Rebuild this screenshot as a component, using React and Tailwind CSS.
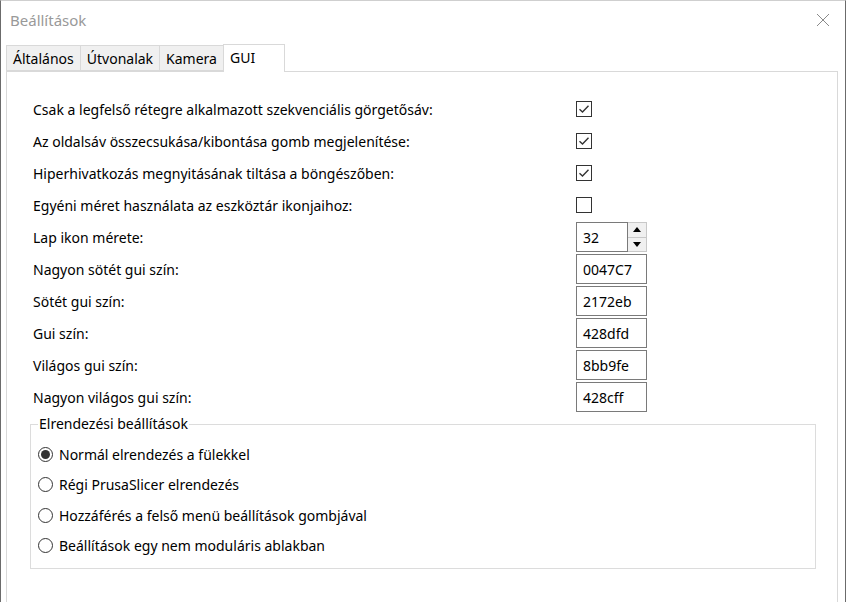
import { useState } from "react";

const font = { fontFamily: '"Noto Sans", "Open Sans", sans-serif' };

const Checkbox = ({ checked, onChange }) => (
  <button
    onClick={onChange}
    className="w-4 h-4 border border-[#333333] bg-white flex items-center justify-center"
  >
    {checked && (
      <svg width="12" height="10" viewBox="0 0 12 10">
        <path d="M1.5 5.2 L4.5 8 L10.5 1.8" fill="none" stroke="#333" strokeWidth="1.4" />
      </svg>
    )}
  </button>
);

const Radio = ({ checked, label, onClick }) => (
  <button onClick={onClick} className="flex items-center h-[30.5px] text-left">
    <span className="w-[15px] h-[15px] rounded-full border border-[#333333] bg-white flex items-center justify-center mr-[6px]">
      {checked && <span className="w-[9px] h-[9px] rounded-full bg-[#333333]" />}
    </span>
    <span>{label}</span>
  </button>
);

const Field = ({ value }) => (
  <div className="w-[71px] h-[30px] border border-[#7a7a7a] bg-white flex items-center pl-[6px]">
    {value}
  </div>
);

const tabs = ["Általános", "Útvonalak", "Kamera", "GUI"];

const App = () => {
  const [checks, setChecks] = useState([true, true, true, false]);
  const [layout, setLayout] = useState(0);
  const [size, setSize] = useState(32);

  const checkRows = [
    "Csak a legfelső rétegre alkalmazott szekvenciális görgetősáv:",
    "Az oldalsáv összecsukása/kibontása gomb megjelenítése:",
    "Hiperhivatkozás megnyitásának tiltása a böngészőben:",
    "Egyéni méret használata az eszköztár ikonjaihoz:",
  ];

  const colorRows = [
    ["Nagyon sötét gui szín:", "0047C7"],
    ["Sötét gui szín:", "2172eb"],
    ["Gui szín:", "428dfd"],
    ["Világos gui szín:", "8bb9fe"],
    ["Nagyon világos gui szín:", "428cff"],
  ];

  const layouts = [
    "Normál elrendezés a fülekkel",
    "Régi PrusaSlicer elrendezés",
    "Hozzáférés a felső menü beállítások gombjával",
    "Beállítások egy nem moduláris ablakban",
  ];

  return (
    <div
      style={font}
      className="w-[846px] h-[602px] overflow-hidden bg-white border-l border-[#6b6b6b] border-r border-t-[#cfcfcf] border-t text-[14px] text-black"
    >
      <div className="h-[42px] flex items-start justify-between">
        <span className="pl-[9px] pt-[8px] text-[15px] text-[#999999]">Beállítások</span>
        <svg width="14" height="14" viewBox="0 0 14 14" className="mt-[12px] mr-[15px]">
          <path d="M1 1 L13 13 M13 1 L1 13" stroke="#8a8a8a" strokeWidth="1" />
        </svg>
      </div>

      <div className="pl-[5px] pr-[7px]">
        <div className="flex items-end h-[28px]">
          {tabs.map((t, i) =>
            i === 3 ? (
              <div
                key={t}
                className="h-[28px] w-[62px] bg-white border border-b-0 border-[#d9d9d9] pl-[6px] pt-[2px] -mb-px relative"
              >
                {t}
              </div>
            ) : (
              <div
                key={t}
                className="h-[26px] bg-[#f0f0f0] border border-[#d9d9d9] border-r-0 px-[6px] flex items-center"
              >
                {t}
              </div>
            )
          )}
        </div>

        <div className="border border-[#d9d9d9] h-[600px] pt-[21px]">
          <div className="pl-[26px]">
            {checkRows.map((label, i) => (
              <div key={label} className="flex items-center h-8">
                <span className="w-[543px]">{label}</span>
                <Checkbox
                  checked={checks[i]}
                  onChange={() => setChecks(checks.map((c, j) => (j === i ? !c : c)))}
                />
              </div>
            ))}

            <div className="flex items-center h-8">
              <span className="w-[543px]">Lap ikon mérete:</span>
              <div className="flex h-[30px]">
                <div className="w-[52px] border border-[#7a7a7a] flex items-center pl-[6px]">
                  {size}
                </div>
                <div className="w-[19px] flex flex-col border border-l-0 border-[#c8c8c8]">
                  <button
                    onClick={() => setSize(size + 1)}
                    className="flex-1 bg-[#f0f0f0] border-b border-[#c8c8c8] flex items-center justify-center"
                  >
                    <svg width="8" height="5" viewBox="0 0 8 5">
                      <path d="M0 5 L4 0 L8 5 Z" fill="#000" />
                    </svg>
                  </button>
                  <button
                    onClick={() => setSize(size - 1)}
                    className="flex-1 bg-[#f0f0f0] flex items-center justify-center"
                  >
                    <svg width="8" height="5" viewBox="0 0 8 5">
                      <path d="M0 0 L8 0 L4 5 Z" fill="#000" />
                    </svg>
                  </button>
                </div>
              </div>
            </div>

            {colorRows.map(([label, value]) => (
              <div key={label} className="flex items-center h-8">
                <span className="w-[543px]">{label}</span>
                <Field value={value} />
              </div>
            ))}
          </div>

          <fieldset className="ml-[23px] mr-[21px] mt-[1px] border border-[#dcdcdc] h-[155px] pl-[7px] pt-[5px]">
            <legend className="ml-0 px-[1px] leading-[20px]">Elrendezési beállítások</legend>
            <div className="flex flex-col">
              {layouts.map((l, i) => (
                <Radio key={l} label={l} checked={layout === i} onClick={() => setLayout(i)} />
              ))}
            </div>
          </fieldset>
        </div>
      </div>
    </div>
  );
};

export default App;
